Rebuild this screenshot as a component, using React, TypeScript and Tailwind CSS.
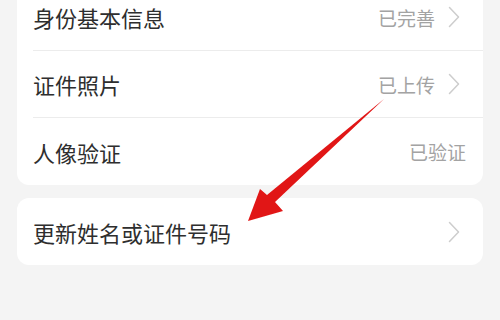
const font = {
  fontFamily: '"Noto Sans CJK SC", "Noto Sans", sans-serif',
};

function Chevron() {
  return (
    <svg
      width="12"
      height="22"
      viewBox="0 0 12 22"
      fill="none"
      className="ml-[13px] mr-[6px]"
    >
      <path
        d="M1.5 1.5 L10.5 11 L1.5 20.5"
        stroke="#cdcdcd"
        strokeWidth="1.5"
        strokeLinecap="round"
        strokeLinejoin="round"
      />
    </svg>
  );
}

type RowProps = {
  label: string;
  value?: string;
  arrow?: boolean;
  divider?: boolean;
};

function Row({ label, value, arrow = true, divider = false }: RowProps) {
  return (
    <div className={`ml-4 flex h-[67px] items-center pr-[17px] ${divider ? "border-b border-[#ececec]" : ""}`}>
      <span className="flex-1 text-[22px] leading-none text-[#2e2e2e]">{label}</span>
      {value && <span className="text-[19px] leading-none text-[#a3a3a3]">{value}</span>}
      {arrow && <Chevron />}
    </div>
  );
}

export default function App() {
  return (
    <div className="relative h-[320px] w-[500px] overflow-hidden bg-[#f4f4f4] px-[17px]" style={font}>
      <div className="-mt-[16px] rounded-xl bg-white">
        <Row label="身份基本信息" value="已完善" divider />
        <Row label="证件照片" value="已上传" divider />
        <Row label="人像验证" value="已验证" arrow={false} />
      </div>
      <div className="mt-[13px] rounded-xl bg-white">
        <Row label="更新姓名或证件号码" />
      </div>

      {/* red pointer arrow laid over the list */}
      <svg className="pointer-events-none absolute left-0 top-0" width="500" height="320" viewBox="0 0 500 320">
        <defs>
          <filter id="s" x="-20%" y="-20%" width="140%" height="140%">
            <feGaussianBlur stdDeviation="0.6" />
          </filter>
        </defs>
        <path
          d="M384 99 L275 202 L283 211 L248 221 L260 189 L267 195 Z"
          fill="#e11414"
          filter="url(#s)"
        />
      </svg>
    </div>
  );
}
